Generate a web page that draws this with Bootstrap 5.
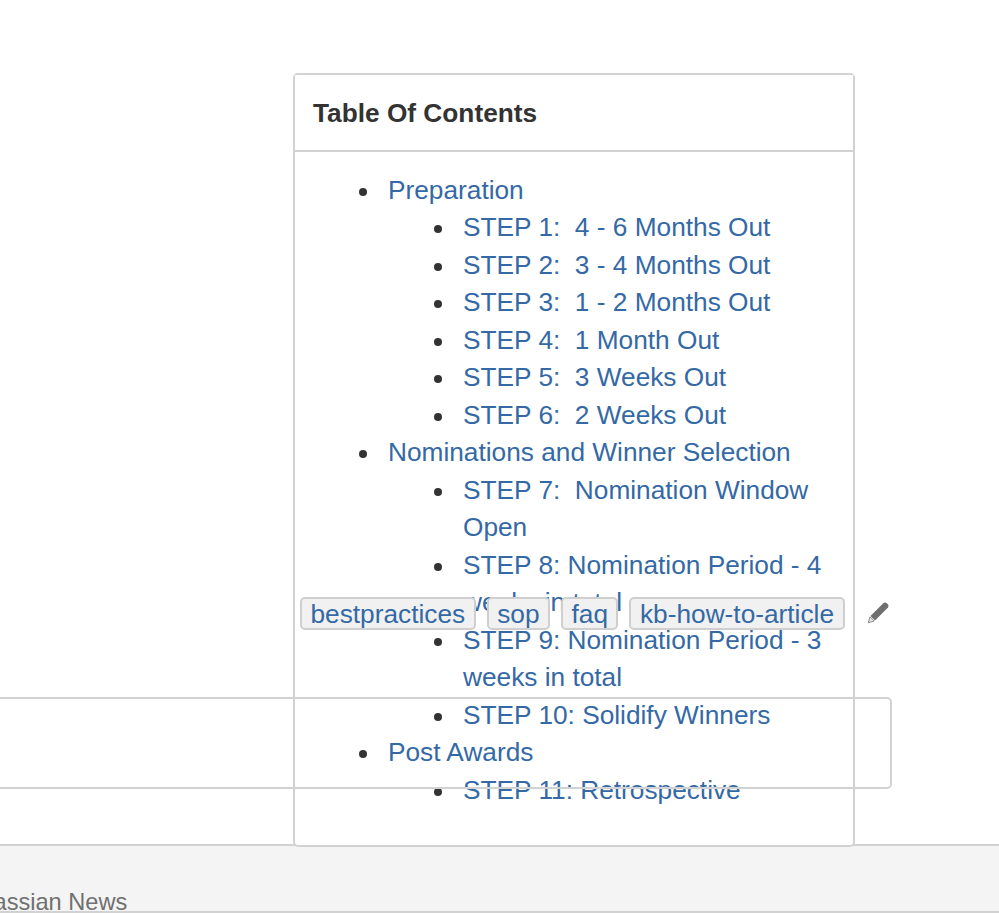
<!DOCTYPE html>
<html>
<head>
  <title>Table Of Contents</title>
  <link rel="stylesheet" href="https://cdn.jsdelivr.net/npm/bootstrap@5.3.0/dist/css/bootstrap.min.css">
  <style>
    html, body { height: 913px; overflow: hidden; }
    body { font-family: "Liberation Sans", Arial, sans-serif; font-size: 26.25px; line-height: 37.5px; color: #333; background: #fff; }
    a { color: #3469a5; text-decoration: none; }
    .page-main { height: 771px; padding-top: 73px; box-sizing: content-box; }
    .toc-card { width: 562px; height: 774px; margin-left: 293px; border: 2px solid #d2d2d2; border-radius: 5px; background: #fff; position: relative; z-index: 1; }
    .toc-card .card-header { height: 77px; padding: 0 18px; background: #fff; border-bottom: 2px solid #d2d2d2; border-radius: 0; font-size: 26.25px; font-weight: 700; line-height: 76px; color: #333; }
    .toc-card .card-body { padding: 19.5px 18px 0; }
    .toc-list { margin: 0; padding-left: 75px; list-style: none; }
    .toc-list li { position: relative; }
    .toc-list li::before { content: ""; position: absolute; left: -29px; top: 16px; width: 8px; height: 8px; border-radius: 50%; background: #333; }
    .tag-row { top: 597px; left: 300px; gap: 11px; z-index: 3; }
    .page-tag { height: 33px; padding: 0 8.5px; background: #f1f1f1; border: 2px solid #cfcfcf; border-radius: 5px; line-height: 30px; }
    .edit-pencil { top: 601px; left: 867px; z-index: 3; }
    .blank-box { top: 697px; left: -10px; width: 902px; height: 92px; border: 2px solid #d2d2d2; border-radius: 5px; z-index: 2; pointer-events: none; }
    .page-foot { height: 69px; background: #f4f4f4; border-top: 2px solid #d2d2d2; border-bottom: 2px solid #d2d2d2; overflow: hidden; }
    .foot-title { margin-left: -34px; margin-top: 41px; font-size: 23.6px; line-height: 30px; color: #707070; white-space: nowrap; }
  </style>
</head>
<body>
<div class="position-relative">
  <div class="page-main">
    <div class="card toc-card">
      <div class="card-header">Table Of Contents</div>
      <div class="card-body">
        <ul class="toc-list">
          <li><a href="#">Preparation</a>
            <ul class="toc-list">
              <li><a href="#">STEP 1:&nbsp; 4 - 6 Months Out</a></li>
              <li><a href="#">STEP 2:&nbsp; 3 - 4 Months Out</a></li>
              <li><a href="#">STEP 3:&nbsp; 1 - 2 Months Out</a></li>
              <li><a href="#">STEP 4:&nbsp; 1 Month Out</a></li>
              <li><a href="#">STEP 5:&nbsp; 3 Weeks Out</a></li>
              <li><a href="#">STEP 6:&nbsp; 2 Weeks Out</a></li>
            </ul>
          </li>
          <li><a href="#">Nominations and Winner Selection</a>
            <ul class="toc-list">
              <li><a href="#">STEP 7:&nbsp; Nomination Window Open</a></li>
              <li><a href="#">STEP 8: Nomination Period - 4 weeks in total</a></li>
              <li><a href="#">STEP 9: Nomination Period - 3 weeks in total</a></li>
              <li><a href="#">STEP 10: Solidify Winners</a></li>
            </ul>
          </li>
          <li><a href="#">Post Awards</a>
            <ul class="toc-list">
              <li><a href="#">STEP 11: Retrospective</a></li>
            </ul>
          </li>
        </ul>
      </div>
    </div>
  </div>

  <div class="position-absolute d-flex tag-row">
    <a class="page-tag" href="#">bestpractices</a>
    <a class="page-tag" href="#">sop</a>
    <a class="page-tag" href="#">faq</a>
    <a class="page-tag" href="#">kb-how-to-article</a>
  </div>
  <svg class="position-absolute edit-pencil" width="23" height="23" viewBox="0 0 23 23">
    <path d="M16.5 2Q18 1 19.5 2L21 3.5Q22 5 21 6.5L8 19.5 3.5 15Z" fill="#6f6f6f"/>
    <path d="M3 15.8 7.2 20 1.2 21.8Z" fill="#e2e2e2" stroke="#777" stroke-width=".8"/>
  </svg>
  <div class="position-absolute blank-box"></div>

  <div class="page-foot">
    <div class="foot-title">Atlassian News</div>
  </div>
</div>
</body>
</html>
